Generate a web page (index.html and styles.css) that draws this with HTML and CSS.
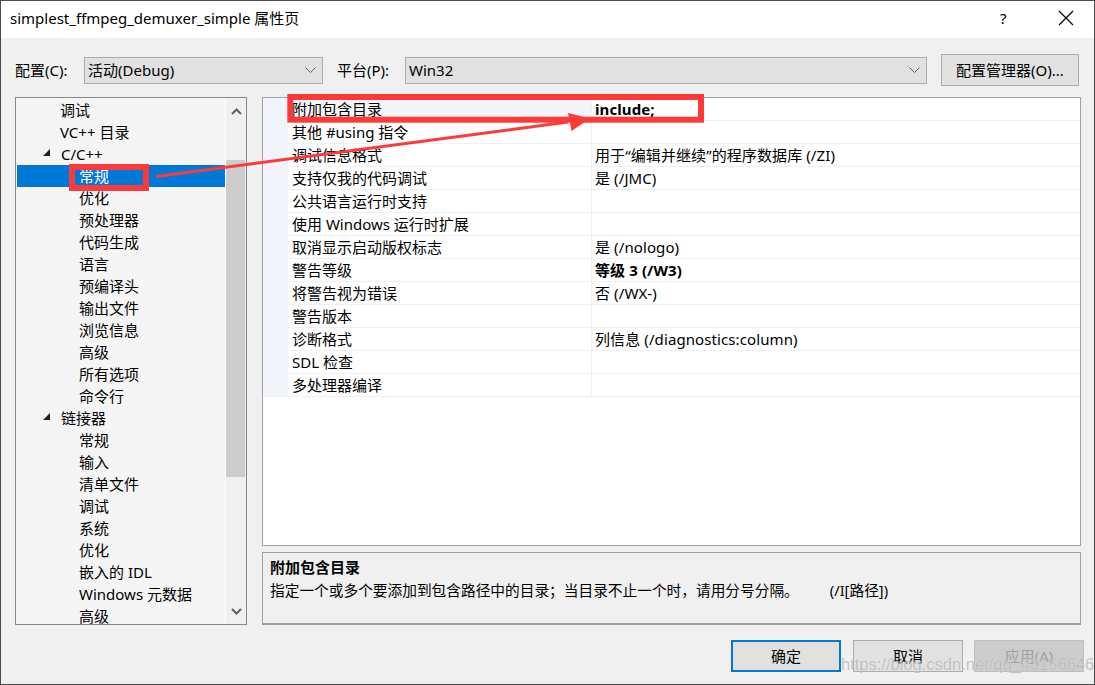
FILE: index.html
```html
<!DOCTYPE html>
<html lang="zh-CN">
<head>
<meta charset="utf-8">
<title>simplest_ffmpeg_demuxer_simple 属性页</title>
<link rel="stylesheet" href="styles.css">
</head>
<body>
<div class="window">
  <div class="titlebar">
    <span class="title">simplest_ffmpeg_demuxer_simple 属性页</span>
    <span class="help">?</span>
    <span class="close"><svg width="16" height="16" viewBox="0 0 16 16"><path d="M1 1 L15 15 M15 1 L1 15" stroke="#000" stroke-width="1.2" fill="none"/></svg></span>
  </div>
  <div class="body">
    <div class="config-row">
      <span class="lbl">配置(C):</span>
      <div class="combo combo-config"><span>活动(Debug)</span><svg class="chev" width="11" height="6" viewBox="0 0 11 6"><path d="M0.5 0.5 L5.5 5.5 L10.5 0.5" stroke="#606060" fill="none" stroke-width="1"/></svg></div>
      <span class="lbl lbl-platform">平台(P):</span>
      <div class="combo combo-platform"><span>Win32</span><svg class="chev" width="11" height="6" viewBox="0 0 11 6"><path d="M0.5 0.5 L5.5 5.5 L10.5 0.5" stroke="#606060" fill="none" stroke-width="1"/></svg></div>
      <div class="btn btn-manager">配置管理器(O)...</div>
    </div>
    <div class="main">
      <div class="tree">
        <div class="tree-list">
          <div class="ti l1">调试</div>
          <div class="ti l1">VC++ 目录</div>
          <div class="ti l1 exp"><svg class="tri" width="8" height="8" viewBox="0 0 8 8"><polygon points="7,0 7,7 0,7" fill="#1e1e1e"/></svg>C/C++</div>
          <div class="ti l2 sel">常规</div>
          <div class="ti l2">优化</div>
          <div class="ti l2">预处理器</div>
          <div class="ti l2">代码生成</div>
          <div class="ti l2">语言</div>
          <div class="ti l2">预编译头</div>
          <div class="ti l2">输出文件</div>
          <div class="ti l2">浏览信息</div>
          <div class="ti l2">高级</div>
          <div class="ti l2">所有选项</div>
          <div class="ti l2">命令行</div>
          <div class="ti l1 exp"><svg class="tri" width="8" height="8" viewBox="0 0 8 8"><polygon points="7,0 7,7 0,7" fill="#1e1e1e"/></svg>链接器</div>
          <div class="ti l2">常规</div>
          <div class="ti l2">输入</div>
          <div class="ti l2">清单文件</div>
          <div class="ti l2">调试</div>
          <div class="ti l2">系统</div>
          <div class="ti l2">优化</div>
          <div class="ti l2">嵌入的 IDL</div>
          <div class="ti l2">Windows 元数据</div>
          <div class="ti l2">高级</div>
        </div>
        <div class="scrollbar">
          <div class="sb-arrow"><svg width="11" height="7" viewBox="0 0 11 7"><path d="M1 6 L5.5 1.5 L10 6" stroke="#606060" stroke-width="2" fill="none"/></svg></div>
          <div class="sb-track"><div class="sb-thumb"></div></div>
          <div class="sb-arrow"><svg width="11" height="7" viewBox="0 0 11 7"><path d="M1 1 L5.5 5.5 L10 1" stroke="#606060" stroke-width="2" fill="none"/></svg></div>
        </div>
      </div>
      <div class="right">
        <div class="grid-panel">
          <div class="grid">
            <div class="row first"><div class="gut"></div><div class="name">附加包含目录</div><div class="val b">include;</div></div>
            <div class="row"><div class="gut"></div><div class="name">其他 #using 指令</div><div class="val"></div></div>
            <div class="row"><div class="gut"></div><div class="name">调试信息格式</div><div class="val">用于“编辑并继续”的程序数据库 (/ZI)</div></div>
            <div class="row"><div class="gut"></div><div class="name">支持仅我的代码调试</div><div class="val">是 (/JMC)</div></div>
            <div class="row"><div class="gut"></div><div class="name">公共语言运行时支持</div><div class="val"></div></div>
            <div class="row"><div class="gut"></div><div class="name">使用 Windows 运行时扩展</div><div class="val"></div></div>
            <div class="row"><div class="gut"></div><div class="name">取消显示启动版权标志</div><div class="val">是 (/nologo)</div></div>
            <div class="row"><div class="gut"></div><div class="name">警告等级</div><div class="val b">等级 3 (/W3)</div></div>
            <div class="row"><div class="gut"></div><div class="name">将警告视为错误</div><div class="val">否 (/WX-)</div></div>
            <div class="row"><div class="gut"></div><div class="name">警告版本</div><div class="val"></div></div>
            <div class="row"><div class="gut"></div><div class="name">诊断格式</div><div class="val">列信息 (/diagnostics:column)</div></div>
            <div class="row"><div class="gut"></div><div class="name">SDL 检查</div><div class="val"></div></div>
            <div class="row"><div class="gut"></div><div class="name">多处理器编译</div><div class="val"></div></div>
          </div>
        </div>
        <div class="desc">
          <div class="desc-title">附加包含目录</div>
          <div class="desc-text">指定一个或多个要添加到包含路径中的目录；当目录不止一个时，请用分号分隔。<span class="desc-sw">(/I[路径])</span></div>
        </div>
      </div>
    </div>
    <div class="footer">
      <div class="btn btn-foot btn-default">确定</div>
      <div class="btn btn-foot">取消</div>
      <div class="btn btn-foot btn-disabled">应用(A)</div>
    </div>
  </div>
  <svg class="annot" width="1095" height="685" viewBox="0 0 1095 685">
    <rect x="72" y="167" width="74" height="21" fill="none" stroke="#fd3a3a" stroke-width="6"/>
    <rect x="290.3" y="97" width="410.7" height="22.7" fill="none" stroke="#fd3a3a" stroke-width="6"/>
    <line x1="156" y1="176.5" x2="568" y2="122" stroke="#fd3a3a" stroke-width="3"/>
    <polygon points="590,118.5 571.5,131 568,113" fill="#fd3a3a"/>
  </svg>
  <div class="watermark">https://blog.csdn.net/qq_43156646</div>
</div>
</body>
</html>
```
FILE: styles.css
```css
* { box-sizing: border-box; }
html, body { margin: 0; padding: 0; }
body {
  font-family: "Noto Sans", "Noto Sans CJK SC", sans-serif;
  font-size: 15px;
  color: #000;
  background: #3a3a3a;
}
.window {
  position: relative;
  width: 1095px;
  height: 685px;
  border: 1px solid #4a4a4a;
  background: #f0f0f0;
  overflow: hidden;
}
.titlebar {
  height: 37px;
  background: #fff;
  display: flex;
  align-items: center;
  padding-left: 9px;
}
.title { font-size: 15px; line-height: 20px; flex: 1; margin-top: -4px; }
.help { font-size: 15px; width: 58px; text-align: left; margin-top: -4px; }
.close { width: 36px; display: flex; align-items: center; margin-top: -4px; }

.body { padding: 0 13px 0 14px; }
.config-row {
  display: flex;
  align-items: center;
  height: 32px;
  margin-top: 16px;
}
.lbl { line-height: 20px; width: 69px; }
.lbl-platform { margin-left: 14px; width: 68px; }
.combo {
  height: 27px;
  border: 1px solid #adadad;
  background: #e1e1e1;
  display: flex;
  align-items: center;
  justify-content: space-between;
  padding: 0 5px 0 3px;
  line-height: 20px;
}
.combo-config { width: 239px; }
.combo-platform { width: 522px; }
.chev { margin-right: 1px; }
.btn {
  border: 1px solid #adadad;
  background: #e1e1e1;
  display: flex;
  align-items: center;
  justify-content: center;
  line-height: 20px;
}
.btn-manager { width: 138px; height: 32px; margin-left: 14px; }

.main {
  display: flex;
  margin-top: 11px;
  height: 528px;
}
.tree {
  width: 232px;
  height: 528px;
  border: 1px solid #828790;
  background: #f5f5f5;
  display: flex;
  overflow: hidden;
}
.tree-list {
  width: 209px;
  padding: 1px 0 0 1px;
  overflow: hidden;
}
.ti {
  height: 22px;
  line-height: 22px;
  white-space: nowrap;
  display: flex;
  align-items: center;
}
.l1 { padding-left: 43px; }
.l2 { padding-left: 62px; }
.exp { padding-left: 26px; }
.tri { margin-right: 10px; margin-top: -2px; }
.sel { background: #0078d7; color: #fff; }
.scrollbar {
  width: 21px;
  border-left: 1px solid #ffffff;
  background: #f0f0f0;
  display: flex;
  flex-direction: column;
}
.sb-arrow {
  height: 26px;
  display: flex;
  align-items: center;
  justify-content: center;
}
.sb-track { flex: 1; padding-top: 36px; }
.sb-thumb { width: 19px; height: 317px; background: #cdcdcd; }

.right {
  margin-left: 15px;
  width: 819px;
  display: flex;
  flex-direction: column;
}
.grid-panel {
  height: 449px;
  border: 1px solid #a0a0a0;
  background: #fff;
}
.grid { display: flex; flex-direction: column; }
.row {
  display: flex;
  height: 23px;
  border-bottom: 1px solid #edf0f5;
}
.gut { width: 25px; background: #f1f4f9; margin-bottom: -1px; }
.name {
  width: 304px;
  padding-left: 4px;
  line-height: 22px;
  border-right: 1px solid #edf0f5;
  white-space: nowrap;
}
.first .name { background: #f3f5f9; }
.val { flex: 1; padding-left: 3px; line-height: 22px; white-space: nowrap; letter-spacing: 0.1px; }
.b { font-weight: bold; }

.desc {
  margin-top: 6px;
  height: 73px;
  border: 1px solid #a0a0a0;
  border-bottom: 2px solid #a0a0a0;
  background: #f0f0f0;
  padding: 3px 7px;
}
.desc-title { font-weight: bold; line-height: 22px; }
.desc-text { line-height: 24px; font-size: 14.7px; }
.desc-sw { margin-left: 31px; }

.footer {
  display: flex;
  justify-content: flex-end;
  margin-top: 15px;
  margin-right: -3px;
  gap: 11px;
}
.btn-foot { width: 110px; height: 32px; }
.btn-default { border: 2px solid #0078d7; margin-right: 1px; }
.btn-disabled { background: #cccccc; border-color: #bfbfbf; color: #a0a0a0; }

.annot { position: absolute; left: -1px; top: -1px; pointer-events: none; }
.watermark {
  position: absolute;
  left: 840px;
  top: 654px;
  font-family: "Liberation Sans", Arial, sans-serif;
  font-size: 16.5px;
  color: rgba(175, 175, 175, 0.75);
  text-shadow: 0 0 1px rgba(255,255,255,0.6);
  pointer-events: none;
  white-space: nowrap;
}
```
